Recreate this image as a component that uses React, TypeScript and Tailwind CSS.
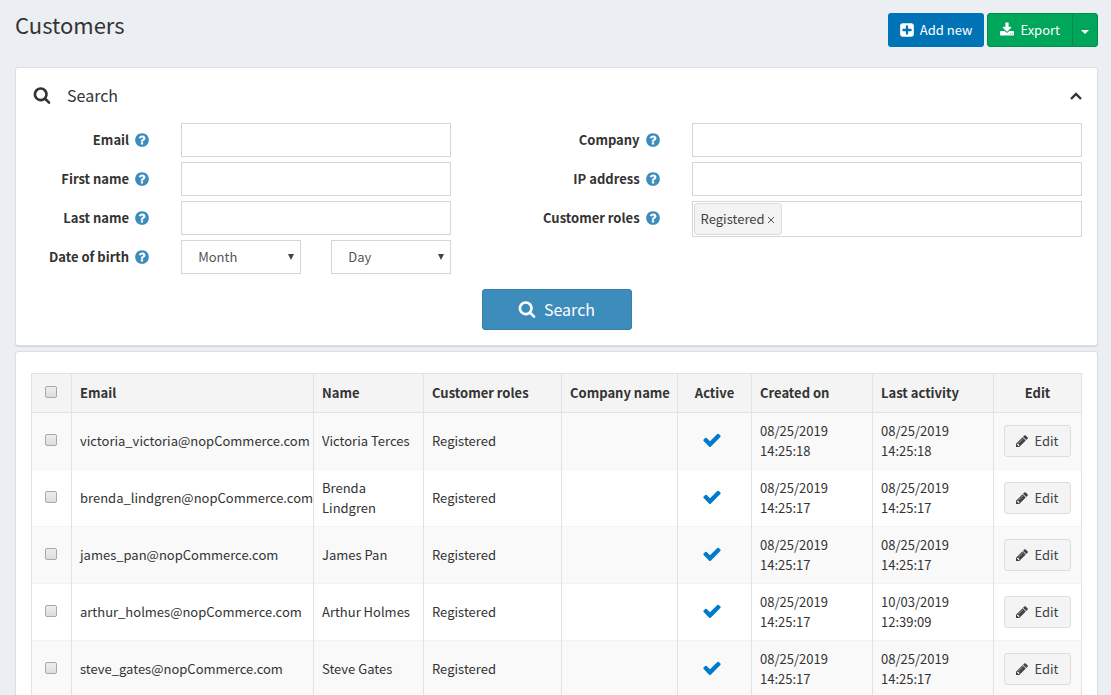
import React from 'react';

const icons = {
  search: {
    width: 1664,
    path: 'M1152 704q0 185 -131.5 316.5t-316.5 131.5t-316.5 -131.5t-131.5 -316.5t131.5 -316.5t316.5 -131.5t316.5 131.5t131.5 316.5zM1664 -128q0 -52 -38 -90t-90 -38q-54 0 -90 38l-343 342q-179 -124 -399 -124q-143 0 -273.5 55.5t-225 150t-150 225t-55.5 273.5t55.5 273.5t150 225t225 150t273.5 55.5t273.5 -55.5t225 -150t150 -225t55.5 -273.5q0 -220 -124 -399l343 -343q37 -37 37 -90z',
  },
  check: {
    width: 1792,
    path: 'M1671 970q0 -40 -28 -68l-724 -724l-136 -136q-28 -28 -68 -28t-68 28l-136 136l-362 362q-28 28 -28 68t28 68l136 136q28 28 68 28t68 -28l294 -295l656 657q28 28 68 28t68 -28l136 -136q28 -28 28 -68z',
  },
  question: {
    width: 1536,
    path: 'M896 160v192q0 14 -9 23t-23 9h-192q-14 0 -23 -9t-9 -23v-192q0 -14 9 -23t23 -9h192q14 0 23 9t9 23zM1152 832q0 88 -55.5 163t-138.5 116t-170 41q-243 0 -371 -213q-15 -24 8 -42l132 -100q7 -6 19 -6q16 0 25 12q53 68 86 92q34 24 86 24q48 0 85.5 -26t37.5 -59q0 -38 -20 -61t-68 -45q-63 -28 -115.5 -86.5t-52.5 -125.5v-36q0 -14 9 -23t23 -9h192q14 0 23 9t9 23q0 19 21.5 49.5t54.5 49.5q32 18 49 28.5t46 35t44.5 48t28 60.5t12.5 81zM1536 640q0 -209 -103 -385.5t-279.5 -279.5t-385.5 -103t-385.5 103t-279.5 279.5t-103 385.5t103 385.5t279.5 279.5t385.5 103t385.5 -103t279.5 -279.5t103 -385.5z',
  },
  pencil: {
    width: 1536,
    path: 'M363 0l91 91l-235 235l-91 -91v-107h128v-128h107zM886 928q0 22 -22 22q-10 0 -17 -7l-542 -542q-7 -7 -7 -17q0 -22 22 -22q10 0 17 7l542 542q7 7 7 17zM832 1120l416 -416l-832 -832h-416v416zM1515 1024q0 -53 -37 -90l-166 -166l-416 416l166 165q36 38 90 38q53 0 91 -38l235 -234q37 -39 37 -91z',
  },
  plusSquare: {
    width: 1536,
    path: 'M1280 576v128q0 26 -19 45t-45 19h-320v320q0 26 -19 45t-45 19h-128q-26 0 -45 -19t-19 -45v-320h-320q-26 0 -45 -19t-19 -45v-128q0 -26 19 -45t45 -19h320v-320q0 -26 19 -45t45 -19h128q26 0 45 19t19 45v320h320q26 0 45 19t19 45zM1536 1120v-960q0 -119 -84.5 -203.5t-203.5 -84.5h-960q-119 0 -203.5 84.5t-84.5 203.5v960q0 119 84.5 203.5t203.5 84.5h960q119 0 203.5 -84.5t84.5 -203.5z',
  },
  download: {
    width: 1664,
    path: 'M1280 192q0 26 -19 45t-45 19t-45 -19t-19 -45t19 -45t45 -19t45 19t19 45zM1536 192q0 26 -19 45t-45 19t-45 -19t-19 -45t19 -45t45 -19t45 19t19 45zM1664 416v-320q0 -40 -28 -68t-68 -28h-1472q-40 0 -68 28t-28 68v320q0 40 28 68t68 28h465l135 -136q58 -56 136 -56t136 56l136 136h464q40 0 68 -28t28 -68zM1339 985q17 -41 -14 -70l-448 -448q-18 -19 -45 -19t-45 19l-448 448q-31 29 -14 70q17 39 59 39h256v448q0 26 19 45t45 19h256q26 0 45 -19t19 -45v-448h256q42 0 59 -39z',
  },
};

const Icon = ({ name, className }: { name: keyof typeof icons; className: string }) => (
  <svg viewBox={`0 0 ${icons[name].width} 1792`} className={`shrink-0 fill-current ${className}`} aria-hidden="true">
    <path d={icons[name].path} transform="matrix(1 0 0 -1 0 1536)" />
  </svg>
);

const Label = ({ htmlFor, children }: { htmlFor: string; children: React.ReactNode }) => (
  <div className="flex h-[34px] w-1/3 items-center justify-end gap-1.5 pr-[17px]">
    <label htmlFor={htmlFor} className="font-bold">
      {children}
    </label>
    <Icon name="question" className="h-4 w-3.5 text-[#3c8dbc]" />
  </div>
);

const TextField = ({ id, label }: { id: string; label: string }) => (
  <div className="flex">
    <Label htmlFor={id}>{label}</Label>
    <div className="w-2/3 px-[15px]">
      <input id={id} type="text" className="block h-[34px] w-full border border-[#d2d6de] bg-white px-3" />
    </div>
  </div>
);

const DateSelect = ({ id, label }: { id: string; label: string }) => (
  <div className="relative flex-1">
    <select
      id={id}
      aria-label={label}
      className="block h-[34px] w-full appearance-none border border-[#d2d6de] bg-white px-4 text-[#555]"
    >
      <option>{label}</option>
    </select>
    <svg viewBox="0 0 6 6" className="pointer-events-none absolute top-3.5 right-[7px] size-1.5 fill-[#444]">
      <path d="M0 0h6L3 6z" />
    </svg>
  </div>
);

const Checkbox = ({ label }: { label: string }) => (
  <input
    type="checkbox"
    aria-label={label}
    className="mb-0.5 ml-[5px] block size-3 appearance-none rounded-xs border border-[#a9a9a9] bg-linear-to-b from-[#eee] to-[#ddd]"
  />
);

const customers = [
  { email: 'victoria_victoria@nopCommerce.com', name: 'Victoria Terces', created: '08/25/2019 14:25:18', activity: '08/25/2019 14:25:18' },
  { email: 'brenda_lindgren@nopCommerce.com', name: 'Brenda Lindgren', created: '08/25/2019 14:25:17', activity: '08/25/2019 14:25:17' },
  { email: 'james_pan@nopCommerce.com', name: 'James Pan', created: '08/25/2019 14:25:17', activity: '08/25/2019 14:25:17' },
  { email: 'arthur_holmes@nopCommerce.com', name: 'Arthur Holmes', created: '08/25/2019 14:25:17', activity: '10/03/2019 12:39:09' },
  { email: 'steve_gates@nopCommerce.com', name: 'Steve Gates', created: '08/25/2019 14:25:17', activity: '08/25/2019 14:25:17' },
];

const Header = () => (
  <header className="flex items-start justify-between pb-5">
    <h1 className="text-[22px] leading-[22px]">Customers</h1>
    <div className="flex gap-[3px] text-white">
      <button type="button" className="flex h-[34px] items-center gap-1.5 rounded-[3px] bg-[#0073b7] px-3">
        <Icon name="plusSquare" className="h-4 w-3.5" />
        Add new
      </button>
      <div className="flex">
        <button type="button" className="flex h-[34px] items-center gap-1.5 rounded-l-[3px] border border-[#008d4c] bg-[#00a65a] px-3">
          <Icon name="download" className="h-4 w-3.5" />
          Export
        </button>
        <button
          type="button"
          aria-label="Export options"
          className="-ml-px flex h-[34px] w-[26px] items-center justify-center rounded-r-[3px] border border-[#008d4c] bg-[#00a65a]"
        >
          <svg viewBox="0 0 8 4" className="mt-1 h-1 w-2 fill-current">
            <path d="M0 0h8L4 4z" />
          </svg>
        </button>
      </div>
    </div>
  </header>
);

const SearchPanel = () => (
  <section className="rounded-[3px] border border-[#dcdee2] bg-white pb-[15px] shadow-[0_1px_1px_rgba(0,0,0,0.1)]">
    <div className="flex items-center justify-between px-[15px] py-[15px]">
      <h2 className="flex items-center gap-4 pl-0.5 text-base leading-[25px]">
        <Icon name="search" className="mb-0.5 size-[18px]" />
        Search
      </h2>
      <button type="button" aria-label="Collapse search">
        <svg viewBox="0 0 12 8" className="h-2 w-3 fill-none stroke-[#333] stroke-[2.4]">
          <path d="M1 7L6 2L11 7" />
        </svg>
      </button>
    </div>
    <div className="flex">
      <div className="flex w-5/12 flex-col gap-[5px]">
        <TextField id="email" label="Email" />
        <TextField id="first-name" label="First name" />
        <TextField id="last-name" label="Last name" />
        <div className="flex">
          <Label htmlFor="birth-month">Date of birth</Label>
          <div className="flex w-2/3 gap-[30px] px-[15px]">
            <DateSelect id="birth-month" label="Month" />
            <DateSelect id="birth-day" label="Day" />
          </div>
        </div>
      </div>
      <div className="flex w-7/12 flex-col gap-[5px]">
        <TextField id="company" label="Company" />
        <TextField id="ip-address" label="IP address" />
        <div className="flex">
          <Label htmlFor="customer-roles">Customer roles</Label>
          <div className="w-2/3 px-[15px]">
            <div className="flex border border-[#d2d6de] p-px">
              <span className="flex h-8 items-center gap-0.5 rounded-[3px] border border-[#dbdbdb] bg-[#f3f3f3] px-1.5 text-[#444]">
                Registered
                <button type="button" aria-label="Remove Registered" className="pt-0.5">
                  <svg viewBox="0 0 8 8" className="size-2 fill-none stroke-[#555]">
                    <path d="M1 1L7 7M7 1L1 7" />
                  </svg>
                </button>
              </span>
              <input id="customer-roles" type="text" className="min-w-0 flex-1 px-2 outline-none" />
            </div>
          </div>
        </div>
      </div>
    </div>
    <button
      type="button"
      className="mx-auto mt-[15px] flex h-[41px] w-[150px] items-center justify-center gap-2 rounded-[3px] border border-[#367fa9] bg-[#3c8dbc] pb-0.5 text-base text-white"
    >
      <Icon name="search" className="size-[18px]" />
      Search
    </button>
  </section>
);

const CustomerTable = () => (
  <section className="mt-[5px] rounded-[3px] border border-[#dcdee2] bg-white px-[15px] pt-[21px] pb-[15px] shadow-[0_1px_1px_rgba(0,0,0,0.1)]">
    <table className="w-full table-fixed border-collapse border border-[#e2e2e2] text-left [&_td]:border-x [&_td]:border-[#e2e2e2] [&_td]:px-2 [&_th]:border-x [&_th]:border-[#e2e2e2] [&_th]:px-2 [&_th]:whitespace-nowrap">
      <colgroup>
        <col className="w-10" />
        <col />
        <col className="w-[110px]" />
        <col className="w-[138px]" />
        <col className="w-[116px]" />
        <col className="w-[74px]" />
        <col className="w-[121px]" />
        <col className="w-[121px]" />
        <col className="w-[88px]" />
      </colgroup>
      <thead>
        <tr className="h-[39px] border-b border-[#e2e2e2] bg-[#f4f4f4]">
          <th>
            <Checkbox label="Select all customers" />
          </th>
          <th>Email</th>
          <th>Name</th>
          <th>Customer roles</th>
          <th>Company name</th>
          <th className="text-center">Active</th>
          <th>Created on</th>
          <th>Last activity</th>
          <th className="text-center">Edit</th>
        </tr>
      </thead>
      <tbody>
        {customers.map((customer) => (
          <tr key={customer.email} className="h-[57px] border-t border-[#f4f4f4] odd:bg-[#f9f9f9]">
            <td>
              <Checkbox label={`Select ${customer.name}`} />
            </td>
            <td>{customer.email}</td>
            <td>{customer.name}</td>
            <td>Registered</td>
            <td></td>
            <td className="pr-3.5!">
              <Icon name="check" className="mx-auto mb-0.5 size-5 text-[#007bcc]" />
            </td>
            <td className="pr-6!">{customer.created}</td>
            <td className="pr-6!">{customer.activity}</td>
            <td>
              <button
                type="button"
                className="mx-auto flex h-8 w-[67px] items-center justify-center gap-1.5 rounded-[3px] border border-[#ddd] bg-[#f4f4f4] text-[#444]"
              >
                <Icon name="pencil" className="h-3.5 w-3" />
                Edit
              </button>
            </td>
          </tr>
        ))}
      </tbody>
    </table>
  </section>
);

const App = () => {
  return (
    <main className="min-h-screen bg-[#ebeef3] py-[13px] pr-[13px] pl-[15px] font-['Noto_Sans_CJK_SC',sans-serif] text-[13px] leading-5 text-[#333]">
      <Header />
      <SearchPanel />
      <CustomerTable />
    </main>
  );
};

export default App;
